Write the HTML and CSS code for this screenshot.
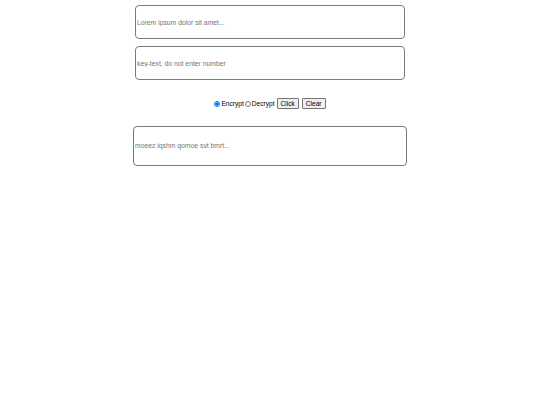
FILE: index.html
```html
<!DOCTYPE html>
<html>
<head>
<meta charset="utf-8">
<link rel="stylesheet" href="styles.css">
</head>
<body>
<main class="app">
  <input class="field" type="text" placeholder="Lorem ipsum dolor sit amet...">
  <input class="field key" type="text" placeholder="key-text, do not enter number">
  <div class="controls">
    <label class="opt"><input type="radio" name="mode" checked><span>Encrypt</span></label>
    <label class="opt"><input type="radio" name="mode"><span>Decrypt</span></label>
    <button class="btn">Click</button>
    <button class="btn clear">Clear</button>
  </div>
  <textarea class="output" placeholder="moeez iqshm qomoe svt bmrt..."></textarea>
</main>
</body>
</html>
```
FILE: styles.css
```css
html, body {
  margin: 0;
  padding: 0;
  background: #fff;
}
body {
  font-family: "Liberation Sans", Arial, sans-serif;
}
.app {
  display: flex;
  flex-direction: column;
  align-items: center;
  padding-top: 5px;
}
.field {
  box-sizing: border-box;
  width: 270px;
  height: 34px;
  border: 1px solid #7a7a7a;
  border-radius: 4px;
  padding: 0 1px;
  font-family: "Liberation Sans", Arial, sans-serif;
  font-size: 6.8px;
  margin: 0;
  outline: none;
}
.field::placeholder, .output::placeholder {
  color: #757575;
}
.key {
  margin-top: 7px;
}
.controls {
  display: flex;
  align-items: center;
  margin-top: 18px;
  font-size: 6.6px;
  height: 11px;
  color: #000;
}
.opt {
  display: flex;
  align-items: center;
}
.opt input {
  width: 6px;
  height: 6px;
  margin: 0 1px 0 0;
}
.opt + .opt {
  margin-left: 1px;
}
.opt + .opt input {
  margin-right: 1px;
}
.btn {
  box-sizing: border-box;
  height: 11px;
  font-family: "Liberation Sans", Arial, sans-serif;
  font-size: 6.6px;
  line-height: 8px;
  padding: 0 3px;
  margin: 0 0 0 2px;
  border: 1px solid #767676;
  border-radius: 1px;
  background: #efefef;
  color: #000;
}
.clear {
  margin-left: 3px;
}
.output {
  display: block;
  box-sizing: border-box;
  width: 274px;
  height: 40px;
  margin-top: 17px;
  border: 1px solid #7a7a7a;
  border-radius: 4px;
  padding: 15px 1px 0;
  font-family: "Liberation Sans", Arial, sans-serif;
  font-size: 6.8px;
  line-height: 8px;
  resize: none;
  outline: none;
}
```
